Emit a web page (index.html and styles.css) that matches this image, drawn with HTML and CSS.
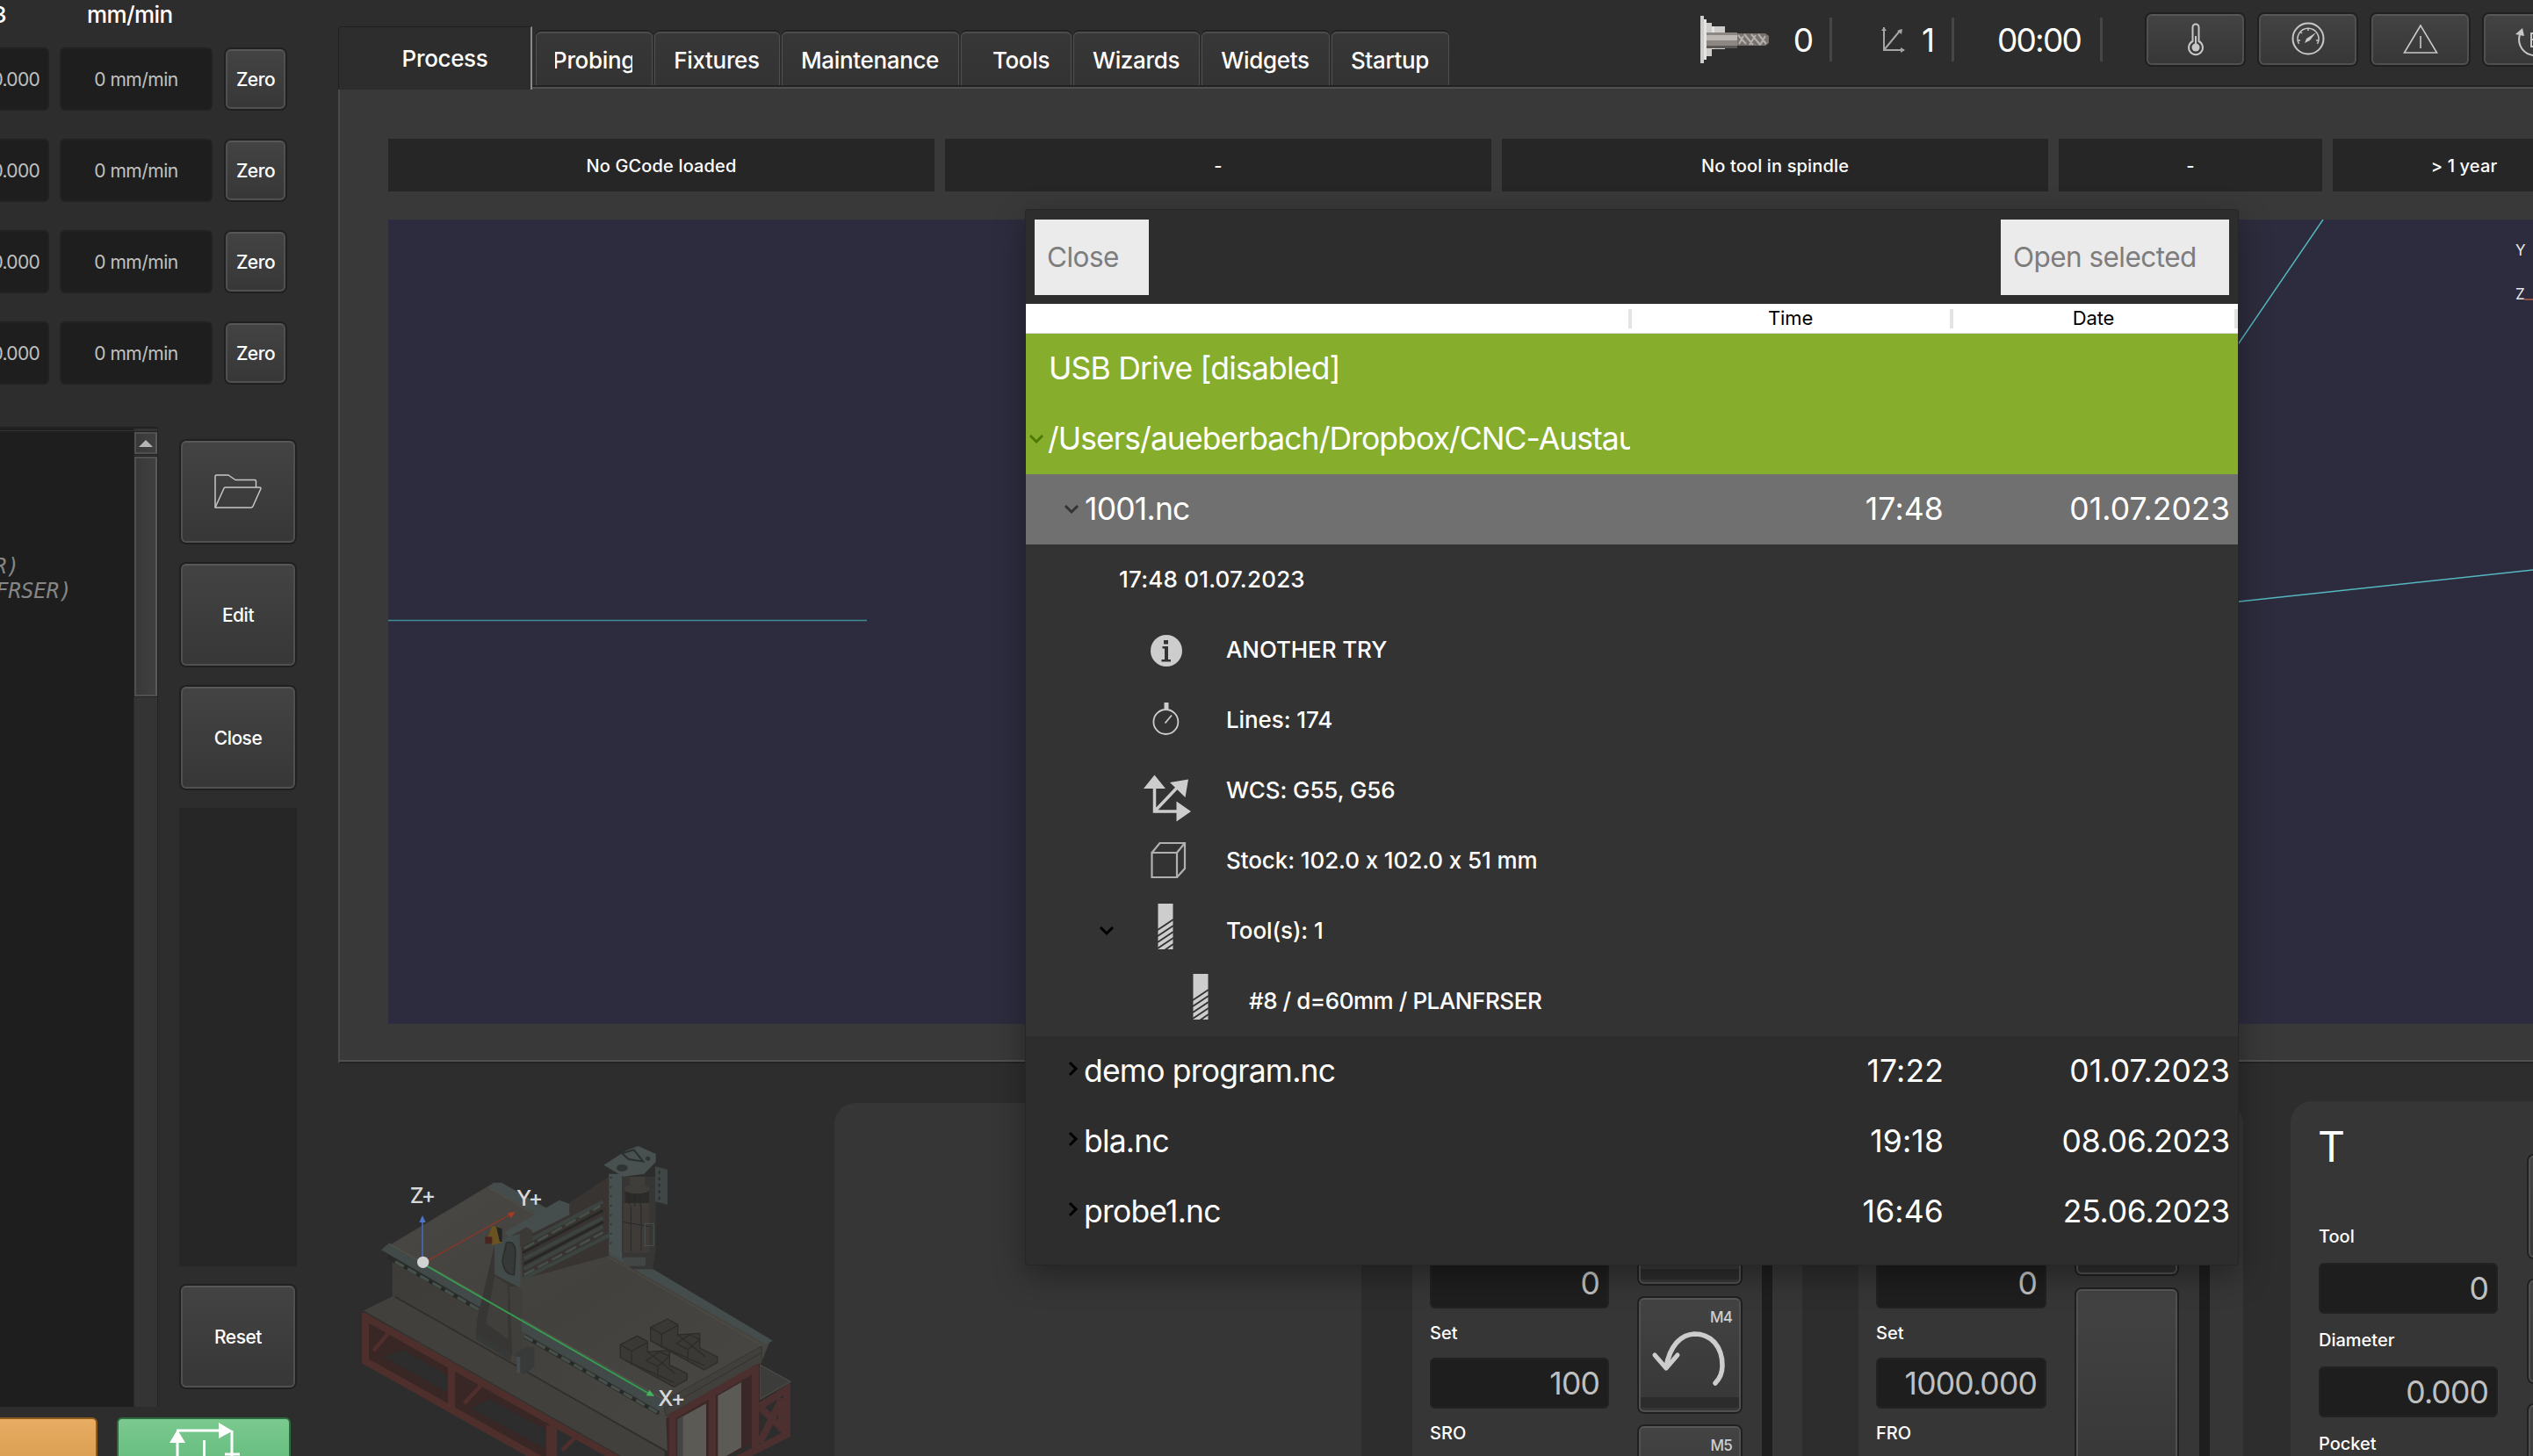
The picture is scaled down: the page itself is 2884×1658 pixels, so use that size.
FILE: index.html
```html
<!DOCTYPE html>
<html lang="en">
<head>
<meta charset="utf-8">
<title>CNC control</title>
<link rel="stylesheet" href="styles.css">
</head>
<body>
<div class="app">
  <aside class="side">
    <div class="axes-head"><span class="axes-ref">G53</span><span class="axes-unit">mm/min</span></div>
    <div class="axes">
      <div class="axis"><div class="field axis-pos">0.000</div><div class="field axis-feed">0 mm/min</div><button class="btn axis-zero">Zero</button></div>
      <div class="axis"><div class="field axis-pos">0.000</div><div class="field axis-feed">0 mm/min</div><button class="btn axis-zero">Zero</button></div>
      <div class="axis"><div class="field axis-pos">0.000</div><div class="field axis-feed">0 mm/min</div><button class="btn axis-zero">Zero</button></div>
      <div class="axis"><div class="field axis-pos">0.000</div><div class="field axis-feed">0 mm/min</div><button class="btn axis-zero">Zero</button></div>
    </div>
    <div class="program">
      <div class="editor">
        <div class="code"><div class="code-line">R)</div><div class="code-line code-wide">FRSER)</div></div>
        <div class="scroll">
          <div class="scroll-up"><svg width="16" height="8" viewBox="0 0 16 8"><path d="M0 8 8 0l8 8z" fill="#b4b4b4"/></svg></div>
          <div class="scroll-thumb"></div>
        </div>
      </div>
      <div class="program-actions">
        <button class="btn tall"><svg width="56" height="42" viewBox="0 0 56 42" fill="none" stroke="#c8c8c8" stroke-width="1.5" stroke-linejoin="round"><path d="M2 39V3.500Q2 2 3.500 2H17l8 5.500h22q1.500 0 1.500 1.500v7"/><path d="M2 39 12 17q.5-1 2-1h38.500q2 0 1.200 2L45 37.500q-.6 1.500-2 1.500z"/></svg></button>
        <button class="btn tall">Edit</button>
        <button class="btn tall">Close</button>
        <div class="filler"></div>
        <button class="btn tall">Reset</button>
      </div>
    </div>
    <div class="run">
      <button class="run-btn hold"></button>
      <button class="run-btn start"><svg width="198" height="44" viewBox="0 0 198 44" fill="none" stroke="#fff" stroke-width="3"><path d="M69 44V16M68 15h50M131 15v29M99.500 26v18M123 42h17"/><path d="m69 14 9 15H60zM116 6l16 9.500L116 24z" fill="#fff" stroke="none"/></svg></button>
    </div>
  </aside>

  <main class="main">
    <header class="top">
      <nav class="tabs">
        <div class="tab active">Process</div>
        <div class="tab w-probing"><span class="clip">Probing</span></div>
        <div class="tab w-fixtures">Fixtures</div>
        <div class="tab w-maint">Maintenance</div>
        <div class="tab w-tools">Tools</div>
        <div class="tab w-wizards">Wizards</div>
        <div class="tab w-widgets">Widgets</div>
        <div class="tab w-startup">Startup</div>
      </nav>
      <div class="status">
        <svg width="78" height="54" viewBox="0 0 78 54"><path d="M0 0h4v4h3v4h6v4h15v26H13v8H7v4H4v4H0z" fill="#cfcdcb"/><path d="M4 4h3v46H4zM13 12h3v26h-3z" fill="#e6e4e2"/><path d="M7 19h35v15H7z" fill="#8c8783"/><path d="M7 22h35v6H7z" fill="#bdb8b3"/><path d="M42 20h32l4 3v8l-4 3H42z" fill="#77726e"/><path d="m43 22 9 10M50 21l10 12M58 21l10 12M66 21l9 11M44 32l5-9M56 33l7-11M68 33l6-10" stroke="#b5b0ab" stroke-width="2"/><path d="M7 34h35v3H7z" fill="#5a5755"/></svg>
        <span class="stat stat-tool">0</span><i class="sep"></i>
        <svg class="wcs-small" width="28" height="30" viewBox="0 0 28 30" fill="none" stroke="#a5a5a5" stroke-width="2"><path d="M3 1v26h23M3 27 22 4"/><path d="m0 5 3-4 3 4zM22 24l5 3-5 3zM18 5l6-2-1 6z" fill="#a5a5a5" stroke="none"/></svg>
        <span class="stat stat-wcs">1</span><i class="sep"></i>
        <span class="stat stat-time">00:00</span><i class="sep"></i>
        <div class="status-btns">
          <button class="btn small"><svg width="20" height="40" viewBox="0 0 20 38" fill="none" stroke="#c8c8c8" stroke-width="2"><path d="M6.500 21V5a3.500 3.500 0 0 1 7 0v16a8 8 0 1 1-7 0z"/><path d="M10 15v10"/><circle cx="10" cy="28" r="4.500" fill="#c8c8c8" stroke="none"/></svg></button>
          <button class="btn small gauge"><svg width="38" height="38" viewBox="0 0 38 38" fill="none" stroke="#c8c8c8" stroke-width="2"><circle cx="19" cy="19" r="17.500"/><path d="M8.500 25a12 12 0 1 1 21 0" stroke-width="1.500"/><path d="M19 7v3M10 11l2 2M7 21h3M28 21h3" stroke-width="1.500"/><path d="m28 12-7 9-6 3 2-5z" fill="#c8c8c8" stroke="none"/></svg></button>
          <button class="btn small gauge"><svg width="40" height="36" viewBox="0 0 40 36" fill="none" stroke="#c8c8c8" stroke-width="1.600"><path d="M20 3 1.500 34h37zM20 15v14"/></svg></button>
          <button class="btn small last"><svg width="44" height="44" viewBox="0 0 44 44" fill="none" stroke="#c8c8c8" stroke-width="2"><path d="M6 14a18 18 0 1 0 16-10"/><path d="M0 16 8 9l2 9z" fill="#c8c8c8" stroke="none"/><path d="M25 15h-7v15h7M18 22h6"/></svg></button>
        </div>
      </div>
    </header>

    <section class="panel">
      <div class="info">
        <div class="info-cell">No GCode loaded</div>
        <div class="info-cell">-</div>
        <div class="info-cell">No tool in spindle</div>
        <div class="info-cell">-</div>
        <div class="info-cell">&gt; 1 year</div>
      </div>
      <svg class="view" width="2442" height="916" viewBox="442 250 2442 916">
        <g stroke="#55b8c0" stroke-width="1.500" fill="none"><path d="M442 706.500h545" stroke="#3f8c96"/><path d="M2645 250 2540 404M2540 686 2884 649"/></g>
        <path d="M2874 341h10" stroke="#b5614a" stroke-width="1.500"/>
        <text x="2864" y="291">Y</text><text x="2864" y="341">Z</text>
      </svg>
    </section>

    <section class="bottom">
      <svg class="machine" width="520" height="403" viewBox="0 0 1560 1209">
        <defs>
          <linearGradient id="bed" x1="0" y1="0" x2="1" y2="1"><stop offset="0" stop-color="#4a4844"/><stop offset=".5" stop-color="#42413d"/><stop offset="1" stop-color="#484743"/></linearGradient>
          <linearGradient id="wall" x1="0" y1="0" x2="1" y2=".6"><stop offset="0" stop-color="#3e3c39"/><stop offset="1" stop-color="#474541"/></linearGradient>
        </defs>
        <path d="M40 608 145 556 1070 1085 1070 1209H1050z" fill="#42403d"/>
        <path d="M1395 792 1500 850 1395 910z" fill="#3c3c3a" stroke="#4a4a47" stroke-width="4"/>
        <path d="M140 425 1085 960V1090L140 560z" fill="url(#wall)"/>
        <path d="M150 560 1070 1085" stroke="#2f2e2c" stroke-width="5"/>
        <path d="M120 390 485 172 1430 712 1400 785 1060 955z" fill="url(#bed)"/>
        <path d="M1065 918 1402 728V785L1075 968z" fill="#41403d" stroke="#363533" stroke-width="3"/>
        <path d="M1075 940 1400 752" stroke="#33322f" stroke-width="3"/>
        <path d="M485 170h28L870 372 1010 465h20L1440 710 1415 722 990 480 815 380 470 186z" fill="#454c4c"/>
        <path d="M470 188 1405 728" stroke="#6a5f54" stroke-width="2" opacity=".6"/>
        <path d="M102 400 128 378 1075 915 1060 955z" fill="#414949"/>
        <path d="M128 378 1075 915" stroke="#5b554d" stroke-width="3"/>
        <path d="M125 424 435 603M590 694 1050 958" stroke="#272a28" stroke-width="14"/>
        <path d="M150 440 435 604M590 694 1050 958" stroke="#46504a" stroke-width="10" stroke-dasharray="34 15"/>
        <!-- frame -->
        <path d="M60 650 690 1000V1150L60 780z" fill="#382725"/>
        <path d="M110 765 180 742 330 830V888zM405 940 475 910 665 1015V1080z" fill="#2d2d2d"/>
        <path d="m75 745 55-65M385 925l65-70M720 1085l50-50" stroke="#4f2f2c" stroke-width="14"/>
        <path d="M48 615V780L690 1140V985M48 630 1000 1165M342 800V950M678 1000V1209M48 780 810 1209" fill="none" stroke="#4f2f2c" stroke-width="24"/>
        <path d="M40 608 1070 1190" stroke="#32312f" stroke-width="4"/>
        <path d="M1075 975 1395 790V1050L1230 1130 1085 1209z" fill="#392827"/>
        <path d="M1115 978 1212 925V1209H1115zM1252 898 1332 852V1075L1252 1120z" fill="#5b5a55"/>
        <path d="M1115 978l18-10v241h-18z" fill="#444"/>
        <g fill="none" stroke="#4b302f" stroke-width="24"><path d="M1097 965V1209M1233 900V1209M1380 795V1090M1085 975 1390 800M1395 935 1488 875V1030L1230 1160M1395 935 1480 1020M1395 1060 1470 910V1020"/></g>
        <!-- gantry -->
        <path d="M750 235 880 150V420L585 500 580 350z" fill="#373431"/>
        <path d="M585 380 860 235M590 430 860 290M590 465 860 320M585 500 880 350" stroke="#3c4341" stroke-width="13"/>
        <path d="M590 395 850 250M590 485 860 340" stroke="#465049" stroke-width="8" stroke-dasharray="40 14"/>
        <path d="M585 410 860 265M590 448 860 305" stroke="#262625" stroke-width="8"/>
        <path d="M522 340 710 230 745 242V280L615 345 560 375z" fill="#464d4d"/>
        <path d="M548 350l50-28 20 12v36l-42 18z" fill="#3c3937"/>
        <path d="M490 380 430 635 425 690 540 760H580V530L490 485z" fill="#373634"/>
        <path d="M490 490 460 650 535 705V520zM540 525h40V750l-30 10z" fill="#403f3c"/>
        <path d="M425 685 545 750V780L425 705z" fill="#373938"/>
        <path d="M490 370 575 345 578 530 490 483z" fill="#434a4a"/>
        <path d="M530 375q35-10 30 50l-4 60q-35 0-40-50z" fill="#353a39" stroke="#2b2e2d" stroke-width="5"/>
        <path d="M565 750 600 730 625 735V800L590 825 565 810z" fill="#383a39"/><path d="M565 765h12v55h-12z" fill="#454d4e"/>
        <path d="M480 320h25l10 20v35l-35 8-15-20z" fill="#6b5320"/><path d="M495 320l20 8v44h-8z" fill="#242424"/><path d="M457 355h24v24h-24z" fill="#4b2422"/>
        <!-- spindle head -->
        <path d="M880 140h45V430L880 408z" fill="#475050"/><path d="M887 150v240" stroke="#2d3131" stroke-width="5" stroke-dasharray="6 26"/>
        <path d="M925 150h115v250l-10 66h-70l-35-40z" fill="#363634"/>
        <path d="M935 195h82v55h-82z" fill="#2b2b2a"/><ellipse cx="976" cy="192" rx="44" ry="16" fill="#3f3d3a"/><path d="M952 150h50v32h-50z" fill="#403e3b"/>
        <path d="M930 240h88v170h-88z" fill="#3e3b38"/><path d="M950 205v40M968 210v40M988 210v40M955 250v155M990 250v155M930 305l88 15" stroke="#2a2928" stroke-width="3"/>
        <path d="M1038 115 1080 125V245L1038 235z" fill="#3f4645"/><path d="M1052 130v105" stroke="#2a2d2c" stroke-width="6" stroke-dasharray="10 12"/>
        <path d="M1003 310h30v75h-30z" fill="none" stroke="#454c4b" stroke-width="4"/>
        <path d="M862 110 940 60 980 45 1040 72V100L1000 140 930 150z" fill="#485050"/>
        <ellipse cx="925" cy="120" rx="19" ry="12" fill="#303433"/><path d="M925 70l40-12 32 40-50-8z" fill="none" stroke="#2b2f2e" stroke-width="6"/><circle cx="1013" cy="88" r="8" fill="#303433"/>
        <path d="M930 425h75v30h-75z" fill="#424746"/>
        <!-- vises -->
        <g id="vise" fill="#3a3936" stroke="#2d2c2a" stroke-width="4" stroke-linejoin="round"><path d="M1022 665 1080 636 1115 655V690L1190 685V735L1250 765V785L1205 810 1022 710z"/><path d="M1022 665 1060 688 1115 658M1060 688V735M1110 720l45-30 35 15-40 35zM1150 740v40M1040 720l165 75M1115 690l95 75"/></g>
        <use href="#vise" x="-103" y="58"/>
        <!-- axes -->
        <path d="M243 430V300" stroke="#4568b8" stroke-width="5"/><path d="M243 282l11 24h-22z" fill="#4f74c8"/>
        <path d="M262 436 545 278" stroke="#8f3524" stroke-width="4"/><path d="M560 270l-14 22-12-18z" fill="#a83a26"/>
        <path d="M258 455 1015 890" stroke="#38984f" stroke-width="6"/><path d="M1035 900l-28-2 12-20z" fill="#44b45c"/>
        <circle cx="245" cy="442" r="20" fill="#d2d2d2"/>
        <g class="axis-name"><text x="200" y="240">Z+</text><text x="564" y="248">Y+</text><text x="1048" y="934">X+</text></g>
      </svg>
      <div class="card card-blank"></div>
      <div class="card card-s">
        <div class="fields">
          <div class="field num">0</div><div class="label">Set</div>
          <div class="field num">100</div><div class="label">SRO</div>
        </div>
        <div class="keys">
          <button class="btn key banded"></button>
          <button class="btn key banded"><span class="key-name">M4</span><svg class="key-icon" width="88" height="68" viewBox="0 0 88 68" fill="none" stroke="#cdcdcd" stroke-linecap="round" stroke-linejoin="round"><path d="M18 46C22 22 34 9 50 8c20 0 32 15 32 36 0 8-3 15-8 20" stroke-width="5.500"/><path d="M5 32l13 15 13-15" stroke-width="5"/></svg></button>
          <button class="btn key"><span class="key-name">M5</span></button>
        </div>
        <div class="bar"></div>
      </div>
      <div class="card card-f">
        <div class="fields">
          <div class="field num">0</div><div class="label">Set</div>
          <div class="field num">1000.000</div><div class="label">FRO</div>
        </div>
        <div class="keys"><button class="btn key first"></button><button class="btn key long"></button></div>
        <div class="bar"></div>
      </div>
      <div class="card card-t">
        <div class="fields">
          <div class="title">T</div><div class="label">Tool</div>
          <div class="field num">0</div><div class="label">Diameter</div>
          <div class="field num">0.000</div><div class="label">Pocket</div>
        </div>
        <div class="keys"><div class="led"></div><button class="btn edge"></button><button class="btn edge"></button><button class="btn edge"></button></div>
      </div>
    </section>
  </main>

  <div class="dialog">
    <div class="dialog-bar"><button class="plain">Close</button><button class="plain open">Open selected</button></div>
    <div class="cols"><span></span><span>Time</span><span>Date</span></div>
    <div class="row drive"><span class="name l0">USB Drive [disabled]</span></div>
    <div class="row drive"><span class="name path"><svg class="chev c0" width="18" height="12" viewBox="0 0 18 12"><path d="m2 2 7 7 7-7"/></svg>/Users/aueberbach/Dropbox/CNC-Austausch</span></div>
    <div class="row picked"><span class="name"><svg class="chev c1" width="18" height="12" viewBox="0 0 18 12"><path d="m2 2 7 7 7-7"/></svg>1001.nc</span><span class="time">17:48</span><span class="date">01.07.2023</span></div>
    <div class="details">
      <div class="detail when">17:48 01.07.2023</div>
      <div class="detail"><svg class="ic" width="60" height="60" viewBox="0 0 60 60"><circle cx="32" cy="31" r="18" fill="#cdcdcd"/><path d="M29 19h5v4.500h-5zM27.500 26H34v15h3v2.500H26.500V41H30V28.500h-2.500z" fill="#333"/></svg>ANOTHER TRY</div>
      <div class="detail"><svg class="ic" width="60" height="60" viewBox="0 0 60 60" fill="none" stroke="#cdcdcd" stroke-width="1.800"><circle cx="31.400" cy="32" r="14"/><path d="M30.500 33.500 38 24.500"/><path d="M29.500 10h5v7.500h-5z" fill="#cdcdcd" stroke="none"/></svg>Lines: 174</div>
      <div class="detail"><svg class="ic" width="60" height="60" viewBox="0 0 60 60"><path d="M18.500 20v34H48M18.500 54 46 25" fill="none" stroke="#cdcdcd" stroke-width="3.500"/><path d="M18.500 12.500 31 28H6zM60 54 43.500 65.500v-23zM57 17.500 53.500 38 36 21z" fill="#cdcdcd"/></svg>WCS: G55, G56</div>
      <div class="detail"><svg class="ic" width="60" height="60" viewBox="0 0 60 60" fill="none" stroke="#b0b0b0" stroke-width="2.200"><path d="M15.500 21H44v28H15.500zM15.500 21l9-11H53v29l-9 10M44 21l9-11"/></svg>Stock: 102.0 x 102.0 x 51 mm</div>
      <div class="detail"><svg class="chev c2" width="18" height="12" viewBox="0 0 18 12"><path d="m2 2 7 7 7-7"/></svg><svg class="ic" width="60" height="60" viewBox="0 0 60 60"><path d="M22.500-1h17v52h-17z" fill="#cdcdcd"/><path d="m22 29 18-12M22 36l18-12M22 43l18-12M22 50l18-12M30 52l10-7" stroke="#333" stroke-width="2"/></svg>Tool(s): 1</div>
      <div class="detail sub"><svg class="ic" width="60" height="60" viewBox="0 0 60 60"><path d="M22.500-1h17v52h-17z" fill="#cdcdcd"/><path d="m22 29 18-12M22 36l18-12M22 43l18-12M22 50l18-12M30 52l10-7" stroke="#333" stroke-width="2"/></svg>#8 / d=60mm / PLANFRSER</div>
    </div>
    <div class="row"><span class="name"><svg class="chev c3" width="12" height="18" viewBox="0 0 12 18"><path d="m2 2 7 7-7 7"/></svg>demo program.nc</span><span class="time">17:22</span><span class="date">01.07.2023</span></div>
    <div class="row"><span class="name"><svg class="chev c3" width="12" height="18" viewBox="0 0 12 18"><path d="m2 2 7 7-7 7"/></svg>bla.nc</span><span class="time">19:18</span><span class="date wide">08.06.2023</span></div>
    <div class="row"><span class="name"><svg class="chev c3" width="12" height="18" viewBox="0 0 12 18"><path d="m2 2 7 7-7 7"/></svg>probe1.nc</span><span class="time">16:46</span><span class="date wide">25.06.2023</span></div>
  </div>
</div>
</body>
</html>
```
FILE: styles.css
```css
* { box-sizing: border-box; }
body { margin: 0; background: #2d2d2d; color: #fff; font-family: Inter, "Liberation Sans", sans-serif; }
button { font: inherit; color: inherit; padding: 0; margin: 0; border: 0; }
svg { display: block; flex: none; }

.app { position: relative; display: grid; grid-template-columns: 384px 2500px; width: 2884px; height: 1658px; overflow: hidden; }

/* shared pieces */
.btn {
  display: flex; align-items: center; justify-content: center; flex: none;
  background: linear-gradient(#434343, #373737);
  border: 2px solid #505050; border-top-color: #575757; border-radius: 6px;
  box-shadow: 0 0 0 2px #202020;
  font-size: 21px; font-weight: 500; letter-spacing: -.5px;
}
.field { background: #1e1e1e; border: 2px solid #222; border-radius: 6px; color: #c0c0c0; display: flex; align-items: center; overflow: hidden; flex: none; }

/* left column */
.side { display: flex; flex-direction: column; height: 1658px; overflow: hidden; }
.side > * { flex: none; }
.axes-head { display: flex; height: 54px; font-size: 26px; font-weight: 500; letter-spacing: -.6px; line-height: 34px; }
.axes-ref { width: 7px; display: flex; justify-content: flex-end; margin-right: 92px; }
.axes { display: flex; flex-direction: column; gap: 32px; }
.axis { display: flex; height: 72px; }
.axis-pos { width: 56px; justify-content: flex-end; padding-right: 9px; font-size: 21px; letter-spacing: -.7px; margin-right: 12px; border-left: 0; border-radius: 0 6px 6px 0; }
.axis-feed { width: 174px; justify-content: center; font-size: 21px; letter-spacing: -.5px; margin-right: 15px; }
.axis-zero { width: 68px; height: 68px; margin-top: 2px; }
.program { display: flex; margin-top: 48px; height: 1116px; }
.editor { display: flex; width: 180px; border-top: 2px solid #222; background: #1e1e1e; border-right: 1px solid #242424; }
.code { width: 152px; overflow: hidden; padding-top: 140px; border-top: 1px solid #333; margin-top: 2px; color: #868686; font: italic 24px/28px "DejaVu Sans Mono", monospace; }
.code-line { height: 28px; margin-left: -7px; }
.code-wide { margin-left: -5px; }
.scroll { width: 27px; background: #343434; border-left: 1px solid #2a2a2a; padding-top: 4px; }
.scroll-up, .scroll-thumb { border: 2px solid #505050; border-right-color: #5a5a5a; background: linear-gradient(90deg, #393939, #404040); box-shadow: 0 0 0 1px #222; }
.scroll-up { height: 25px; display: flex; align-items: center; justify-content: center; margin-bottom: 3px; }
.scroll-thumb { height: 273px; }
.program-actions { display: flex; flex-direction: column; align-items: center; width: 134px; margin-left: 24px; padding-top: 16px; }
.tall { width: 130px; height: 116px; margin-bottom: 24px; }
.filler { width: 134px; height: 522px; margin: -2px 0 22px; background: #262626; flex: none; }
.run { display: flex; gap: 22px; margin-top: 12px; height: 60px; }
.run-btn { border-radius: 6px 6px 0 0; height: 60px; border: 2px solid; display: flex; align-items: flex-start; }
.hold { width: 111px; background: linear-gradient(#e8ac62, #d89d50); border-color: #8a5a1c; border-left: 0; border-radius: 0 6px 0 0; }
.start { width: 198px; background: linear-gradient(#7bc98f, #63bb7c); border-color: #2d6b3e; }
.start svg { margin-left: -2px; margin-top: -2px; }

/* top bar */
.main { display: flex; flex-direction: column; height: 1658px; overflow: hidden; }
.top { display: flex; height: 99px; flex: none; background: linear-gradient(#222, #222) 222px 97px / 2278px 2px no-repeat; }
.tabs { display: flex; align-items: flex-start; padding: 34px 0 0 1px; }
.tab { display: flex; align-items: center; justify-content: center; height: 61px; padding: 2px 1px 0 0; background: linear-gradient(#373737, #333); border: 1px solid #505050; border-top: 2px solid #4c4c4c; border-bottom: 0; border-radius: 6px 6px 0 0; box-shadow: 0 -2px 0 #222; margin: 2px 1px 0; font-size: 26px; font-weight: 500; letter-spacing: -.35px; }
.tab.active { position: relative; z-index: 1; width: 221px; height: 72px; margin: -4px 3px 0 0; padding: 0 0 0 23px; background: #2d2d2d; border: 1px solid #202020; border-bottom: 0; border-right: 2px solid #8a8a8a; border-radius: 4px 0 0 0; box-shadow: none; }
.clip { width: 88px; display: flex; justify-content: center; overflow: hidden; }
.w-probing { width: 133px; } .w-fixtures { width: 143px; } .w-maint { width: 202px; } .w-tools { width: 126px; padding-left: 12px; }
.w-wizards { width: 144px; } .w-widgets { width: 146px; } .w-startup { width: 134px; }
.status { display: flex; align-items: center; height: 90px; margin-left: 285px; }
.stat { display: flex; justify-content: center; font-size: 37px; letter-spacing: -1.8px; line-height: 50px; padding-top: 1px; }
.stat-tool { width: 69px; padding-left: 8px; }
.stat-wcs { width: 52px; padding-right: 3px; }
.stat-time { width: 166px; padding-left: 27px; }
.sep { width: 3px; height: 50px; background: #464646; flex: none; }
.wcs-small { margin-left: 56px; }
.status-btns { display: flex; gap: 17px; margin-left: 50px; }
.small { width: 111px; height: 58px; }
.gauge { padding-bottom: 3px; }
.last { justify-content: flex-start; padding-left: 34px; }

/* main panel */
.panel { height: 1112px; flex: none; background: #393939; border: 2px solid #505050; border-right: 0; border-left-color: #4a4a4a; border-bottom: 2px solid #232323; box-shadow: inset 0 -2px 0 #505050; margin-left: 1px; padding: 57px 0 0 55px; overflow: hidden; }
.info { display: grid; grid-template-columns: 622px 622px 622px 300px 299px; column-gap: 12px; }
.info-cell { display: flex; align-items: center; justify-content: center; height: 60px; padding-top: 1px; background: #262626; font-size: 20px; font-weight: 500; letter-spacing: .15px; }
.view { margin-top: 32px; background: #2c2c3e; }
.view text { font-size: 17px; fill: #e8e8e8; }

/* bottom cards */
.bottom { display: flex; height: 447px; padding: 43px 0 0 16px; }
.machine { margin: 36px 30px 0 0; }
.axis-name { font-size: 74px; font-weight: 500; fill: #d8d8d8; letter-spacing: -5px; }
.card { display: flex; flex: none; background: #363636; border-radius: 24px 24px 0 0; height: 430px; margin-top: 2px; }
.card-blank { width: 600px; margin-right: 58px; }
.card-s { width: 444px; margin-right: 64px; padding-left: 20px; }
.card-f { width: 438px; margin-right: 54px; padding-left: 20px; }
.card-t { width: 420px; margin-top: 0; padding-left: 32px; }
.fields { display: flex; flex: none; flex-direction: column; padding-top: 176px; }
.num { height: 58px; justify-content: flex-end; padding-right: 9px; font-size: 35.5px; letter-spacing: -.85px; }
.label { height: 56px; display: flex; align-items: center; font-size: 20px; font-weight: 500; }
.card-s .fields { width: 204px; }
.card-f .fields { width: 194px; }
.card-t .fields { width: 204px; padding-top: 0; }
.card-t .label { height: 60px; }
.title { height: 124px; line-height: 104px; font-size: 48px; margin-left: -1px; }
.keys { display: flex; flex: none; flex-direction: column; gap: 16px; }
.card-s .keys { margin-left: 34px; padding-top: 76px; }
.key { position: relative; width: 116px; height: 130px; }
.banded::after { content: ""; position: absolute; left: 0; right: 0; bottom: 3px; height: 12px; background: #2c2c2c; }
.key-name { position: absolute; top: 10px; right: 8px; font-size: 17px; letter-spacing: -.8px; color: #cfcfcf; }
.key-icon { position: absolute; left: 11px; top: 31px; }
.bar { width: 12px; background: #1e1e1e; }
.card-s .bar { margin-left: 24px; }
.card-f .keys { margin-left: 34px; padding-top: 67px; gap: 17px; }
.card-f .bar { margin-left: 25px; }
.first, .long { width: 115px; }
.first { background: #2e2e2e; height: 128px; }
.long { height: 220px; }
.card-t .keys { margin-left: 35px; padding-top: 36px; gap: 26px; }
.led { width: 40px; height: 40px; border-radius: 8px; background: linear-gradient(#4a2626, #1c1212); }
.edge { width: 116px; height: 116px; }

/* file dialog */
.dialog { position: absolute; left: 1168px; top: 239px; width: 1380px; height: 1201px; background: #2d2d2d; box-shadow: 0 0 0 1px #262626, 0 12px 36px rgba(0, 0, 0, .35); border-radius: 3px; }
.dialog-bar { display: flex; justify-content: space-between; height: 107px; padding: 11px 10px 10px; }
.plain { width: 130px; height: 86px; background: #ebebeb; color: #7d7d7d; font-size: 31.5px; letter-spacing: -.55px; text-align: left; padding: 0 0 1px 14px; }
.open { width: 260px; }
.cols { display: grid; grid-template-columns: 690px 366px 324px; height: 34px; background: #fff; border-bottom: 1px solid #dcdcdc; color: #000; font-size: 22px; letter-spacing: -.1px; text-align: center; }
.cols span { border-right: 4px solid #e3e3e3; height: 22px; margin-top: 6px; line-height: 21px; padding-right: 1px; }
.row { display: grid; grid-template-columns: 688px 366px 326px; align-items: center; height: 80px; font-size: 35.5px; letter-spacing: -.8px; }
.drive { background: #86ae2c; }
.picked { background: #707070; }
.name { display: flex; align-items: center; overflow: hidden; white-space: nowrap; line-height: 78px; }
.path { letter-spacing: -.95px; }
.l0 { padding-left: 26px; }
.time, .date { text-align: right; padding-right: 9px; letter-spacing: .15px; line-height: 78px; }
.date.wide { letter-spacing: -.25px; }
.chev { fill: none; stroke: #000; stroke-width: 3; }
.c0 { margin: 0 4px 0 3px; stroke: #4c7804; }
.c1 { margin: 0 6px 0 43px; stroke: #333; }
.c2 { margin: 0 -41px 0 83px; }
.c3 { margin: -6px 6px 0 48px; }
.details { background: #333; font-size: 26px; font-weight: 450; letter-spacing: -.1px; line-height: 78px; }
.detail { display: flex; align-items: center; height: 80px; padding-bottom: 1px; }
.when { padding-left: 106px; letter-spacing: .2px; }
.ic { margin: 1px 40px 0 128px; overflow: visible; }
.chev + .ic { margin-left: 68px; }
.detail.sub { letter-spacing: -.45px; }
.sub .ic { margin-left: 168px; margin-right: 26px; }
```
